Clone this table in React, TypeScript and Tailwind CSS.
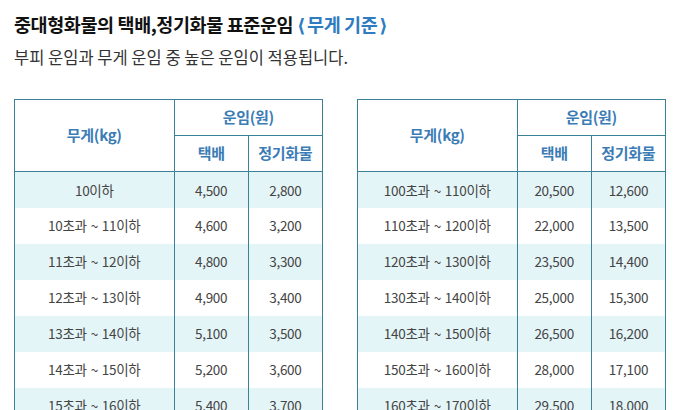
const left = [
  ["10이하", "4,500", "2,800"],
  ["10초과 ~ 11이하", "4,600", "3,200"],
  ["11초과 ~ 12이하", "4,800", "3,300"],
  ["12초과 ~ 13이하", "4,900", "3,400"],
  ["13초과 ~ 14이하", "5,100", "3,500"],
  ["14초과 ~ 15이하", "5,200", "3,600"],
  ["15초과 ~ 16이하", "5,400", "3,700"],
];

const right = [
  ["100초과 ~ 110이하", "20,500", "12,600"],
  ["110초과 ~ 120이하", "22,000", "13,500"],
  ["120초과 ~ 130이하", "23,500", "14,400"],
  ["130초과 ~ 140이하", "25,000", "15,300"],
  ["140초과 ~ 150이하", "26,500", "16,200"],
  ["150초과 ~ 160이하", "28,000", "17,100"],
  ["160초과 ~ 170이하", "29,500", "18,000"],
];

function Range({ text }: { text: string }) {
  const parts = text.split(" ~ ");
  if (parts.length < 2) return <>{text}</>;
  return (
    <>
      {parts[0]}
      <span className="px-[4px]">~</span>
      {parts[1]}
    </>
  );
}

function RateTable({ rows }: { rows: string[][] }) {
  return (
    <table className="w-[309px] table-fixed border-collapse border border-[#3a8198] text-center">
      <colgroup>
        <col className="w-[159px]" />
        <col className="w-[74px]" />
        <col className="w-[74px]" />
      </colgroup>
      <thead className="text-[15px] font-bold tracking-[-0.3px] text-[#3b7cb6]">
        <tr className="h-[36px]">
          <th rowSpan={2} className="border-r border-b border-[#3a8198] font-bold">
            무게(kg)
          </th>
          <th colSpan={2} className="border-b border-[#3a8198] font-bold">
            운임(원)
          </th>
        </tr>
        <tr className="h-[36px]">
          <th className="border-r border-b border-[#3a8198] font-bold">택배</th>
          <th className="border-b border-[#3a8198] font-bold">정기화물</th>
        </tr>
      </thead>
      <tbody className="text-[13.5px] tracking-[-0.3px] text-[#444]">
        {rows.map((r, i) => (
          <tr key={r[0]} className={i % 2 === 0 ? "h-[36px] bg-[#e4f5f8]" : "h-[36px] bg-white"}>
            <td className="border-r border-[#3a8198] whitespace-nowrap">
              <Range text={r[0]} />
            </td>
            <td className="border-r border-[#3a8198]">{r[1]}</td>
            <td>{r[2]}</td>
          </tr>
        ))}
      </tbody>
    </table>
  );
}

export default function App() {
  return (
    <div className="min-h-screen bg-white px-[14px] pt-[11px] font-['Noto_Sans_CJK_KR','Noto_Sans',sans-serif]">
      <h1 className="text-[18.5px] font-bold leading-[26px] tracking-[-0.4px] text-[#111]">
        중대형화물의 택배,정기화물 표준운임{" "}
        <span className="text-[#2f7cc0]">
          <span className="mr-[2px] font-['DejaVu_Sans',sans-serif] font-bold">⟨</span>무게 기준
          <span className="ml-[2px] font-['DejaVu_Sans',sans-serif] font-bold">⟩</span>
        </span>
      </h1>
      <p className="mt-[7px] text-[16.5px] leading-[22px] text-[#333]">
        부피 운임과 무게 운임 중 높은 운임이 적용됩니다.
      </p>
      <div className="mt-[31px] flex gap-[34px]">
        <RateTable rows={left} />
        <RateTable rows={right} />
      </div>
    </div>
  );
}
